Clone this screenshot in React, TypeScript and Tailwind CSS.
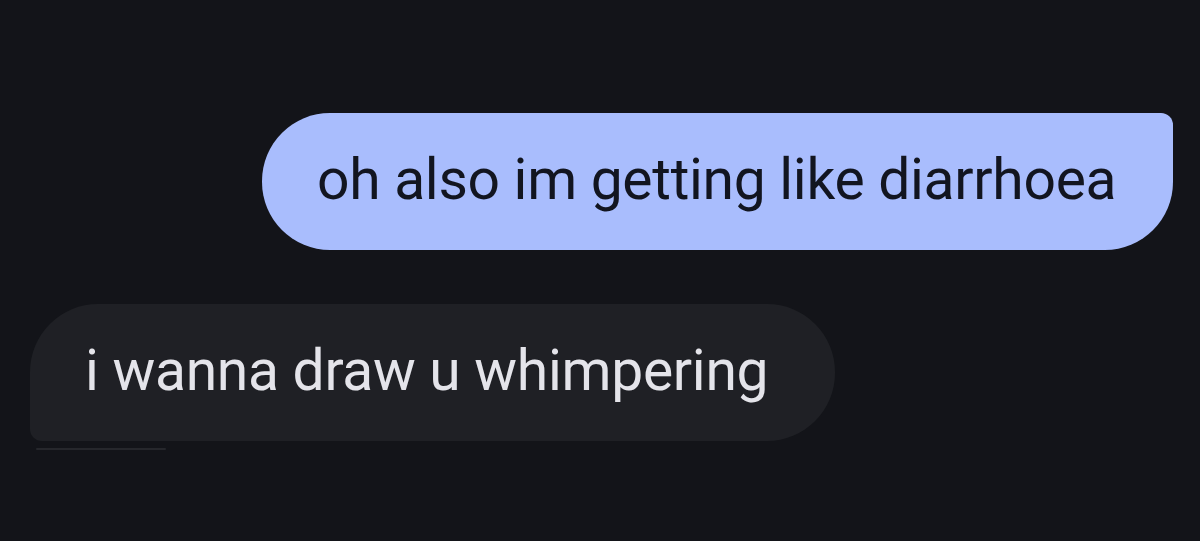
export default function App() {
  return (
    <div className="h-[541px] w-[1200px] overflow-hidden bg-[#131419] font-['Roboto',sans-serif]">
      <div className="flex flex-col pt-[113px]">
        {/* Sent */}
        <div className="flex justify-end pr-[27px]">
          <div className="flex h-[137px] w-[911px] items-center rounded-[68px] rounded-tr-[12px] bg-[#a9bdfd] pb-[4px] pl-[55px] text-[57px] leading-none tracking-[-0.3px] text-[#121520]">
            oh also im getting like diarrhoea
          </div>
        </div>

        {/* Received */}
        <div className="mt-[54px] flex flex-col pl-[30px]">
          <div className="flex h-[137px] w-[805px] items-center rounded-[68px] rounded-bl-[12px] bg-[#1f2025] pb-[4px] pl-[55px] text-[57px] leading-none tracking-[-0.3px] text-[#e4e4ea]">
            i wanna draw u whimpering
          </div>
          <div className="mt-[7px] ml-[6px] h-[2px] w-[130px] rounded-full bg-[#26272c]" />
        </div>
      </div>
    </div>
  );
}
